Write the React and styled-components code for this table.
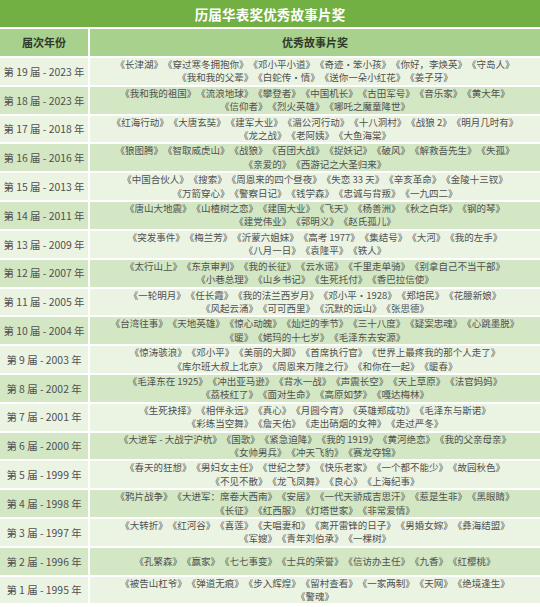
import React from "react";
import styled, { createGlobalStyle } from "styled-components";

const Global = createGlobalStyle`
  html, body { margin: 0; padding: 0; background: #ffffff; }
  body { font-family: "Noto Sans CJK SC", "Noto Sans", sans-serif; text-spacing-trim: space-all; }
`;

const Table = styled.div`
  width: 540px;
  display: flex;
  flex-direction: column;
  gap: 2px;
  background: #ffffff;
`;

const TitleBar = styled.div`
  height: 27px;
  background: #72b043;
  color: #ffffff;
  font-weight: 700;
  font-size: 13.5px;
  display: flex;
  align-items: center;
  justify-content: center;
  letter-spacing: 0.2px;
`;

const Row = styled.div`
  display: grid;
  grid-template-columns: 88px 1fr;
  column-gap: 2px;
  min-height: ${(p) => (p.$head ? "27px" : "26.8px")};
`;

const Cell = styled.div`
  background: ${(p) => (p.$head ? "#a9d18e" : p.$alt ? "#d3e7c4" : "#ebf4e3")};
  color: ${(p) => (p.$head ? "#2f3a28" : "#505050")};
  display: flex;
  flex-direction: column;
  align-items: center;
  justify-content: center;
  text-align: center;
  font-size: ${(p) => (p.$head ? "11px" : p.$label ? "10.4px" : "9.5px")};
  font-weight: ${(p) => (p.$head ? 700 : 400)};
  line-height: 13.4px;
  text-spacing-trim: space-all;
`;

const Line = styled.div`
  white-space: nowrap;
`;

const rows = [
  ["第 19 届 - 2023 年", ["《长津湖》《穿过寒冬拥抱你》《邓小平小道》《奇迹·笨小孩》《你好，李焕英》《守岛人》", "《我和我的父辈》《白蛇传·情》《送你一朵小红花》《姜子牙》"]],
  ["第 18 届 - 2023 年", ["《我和我的祖国》《流浪地球》《攀登者》《中国机长》《古田军号》《音乐家》《黄大年》", "《信仰者》《烈火英雄》《哪吒之魔童降世》"]],
  ["第 17 届 - 2018 年", ["《红海行动》《大唐玄奘》《建军大业》《湄公河行动》《十八洞村》《战狼 2》《明月几时有》", "《龙之战》《老阿姨》《大鱼海棠》"]],
  ["第 16 届 - 2016 年", ["《狼图腾》《智取威虎山》《战狼》《百团大战》《捉妖记》《破风》《解救吾先生》《失孤》", "《亲爱的》《西游记之大圣归来》"]],
  ["第 15 届 - 2013 年", ["《中国合伙人》《搜索》《周恩来的四个昼夜》《失恋 33 天》《辛亥革命》《金陵十三钗》", "《万箭穿心》《警察日记》《钱学森》《忠诚与背叛》《一九四二》"]],
  ["第 14 届 - 2011 年", ["《唐山大地震》《山楂树之恋》《建国大业》《飞天》《杨善洲》《秋之白华》《钢的琴》", "《建党伟业》《郭明义》《赵氏孤儿》"]],
  ["第 13 届 - 2009 年", ["《突发事件》《梅兰芳》《沂蒙六姐妹》《高考 1977》《集结号》《大河》《我的左手》", "《八月一日》《袁隆平》《铁人》"]],
  ["第 12 届 - 2007 年", ["《太行山上》《东京审判》《我的长征》《云水谣》《千里走单骑》《别拿自己不当干部》", "《小巷总理》《山乡书记》《生死托付》《香巴拉信使》"]],
  ["第 11 届 - 2005 年", ["《一轮明月》《任长霞》《我的法兰西岁月》《邓小平·1928》《郑培民》《花腰新娘》", "《风起云涌》《可可西里》《沉默的远山》《张思德》"]],
  ["第 10 届 - 2004 年", ["《台湾往事》《天地英雄》《惊心动魄》《灿烂的季节》《三十八度》《疑案忠魂》《心跳墨脱》", "《暖》《婼玛的十七岁》《毛泽东去安源》"]],
  ["第 9 届 - 2003 年", ["《惊涛骇浪》《邓小平》《美丽的大脚》《首席执行官》《世界上最疼我的那个人走了》", "《库尔班大叔上北京》《周恩来万隆之行》《和你在一起》《暖春》"]],
  ["第 8 届 - 2002 年", ["《毛泽东在 1925》《冲出亚马逊》《背水一战》《声震长空》《天上草原》《法官妈妈》", "《荔枝红了》《面对生命》《高原如梦》《嘎达梅林》"]],
  ["第 7 届 - 2001 年", ["《生死抉择》《相伴永远》《真心》《月圆今宵》《英雄郑成功》《毛泽东与斯诺》", "《彩练当空舞》《詹天佑》《走出硝烟的女神》《走过严冬》"]],
  ["第 6 届 - 2000 年", ["《大进军 - 大战宁沪杭》《国歌》《紧急迫降》《我的 1919》《黄河绝恋》《我的父亲母亲》", "《女帅男兵》《冲天飞豹》《赛龙夺锦》"]],
  ["第 5 届 - 1999 年", ["《春天的狂想》《男妇女主任》《世纪之梦》《快乐老家》《一个都不能少》《故园秋色》", "《不见不散》《龙飞凤舞》《良心》《上海纪事》"]],
  ["第 4 届 - 1998 年", ["《鸦片战争》《大进军：席卷大西南》《安居》《一代天骄成吉思汗》《惹是生非》《黑眼睛》", "《长征》《红西服》《灯塔世家》《非常爱情》"]],
  ["第 3 届 - 1997 年", ["《大转折》《红河谷》《喜莲》《夫唱妻和》《离开雷锋的日子》《男婚女嫁》《彝海结盟》", "《军嫂》《青年刘伯承》《一棵树》"]],
  ["第 2 届 - 1996 年", ["《孔繁森》《赢家》《七七事变》《士兵的荣誉》《信访办主任》《九香》《红樱桃》"]],
  ["第 1 届 - 1995 年", ["《被告山杠爷》《弹道无痕》《步入辉煌》《留村查看》《一家两制》《天网》《绝境逢生》", "《警魂》"]],
];

export default function App() {
  return (
    <>
      <Global />
      <Table>
        <TitleBar>历届华表奖优秀故事片奖</TitleBar>
        <Row $head>
          <Cell $head>届次年份</Cell>
          <Cell $head>优秀故事片奖</Cell>
        </Row>
        {rows.map(([label, lines], i) => (
          <Row key={label}>
            <Cell $alt={i % 2 === 1} $label>{label}</Cell>
            <Cell $alt={i % 2 === 1}>
              {lines.map((l) => (
                <Line key={l}>{l}</Line>
              ))}
            </Cell>
          </Row>
        ))}
      </Table>
    </>
  );
}
